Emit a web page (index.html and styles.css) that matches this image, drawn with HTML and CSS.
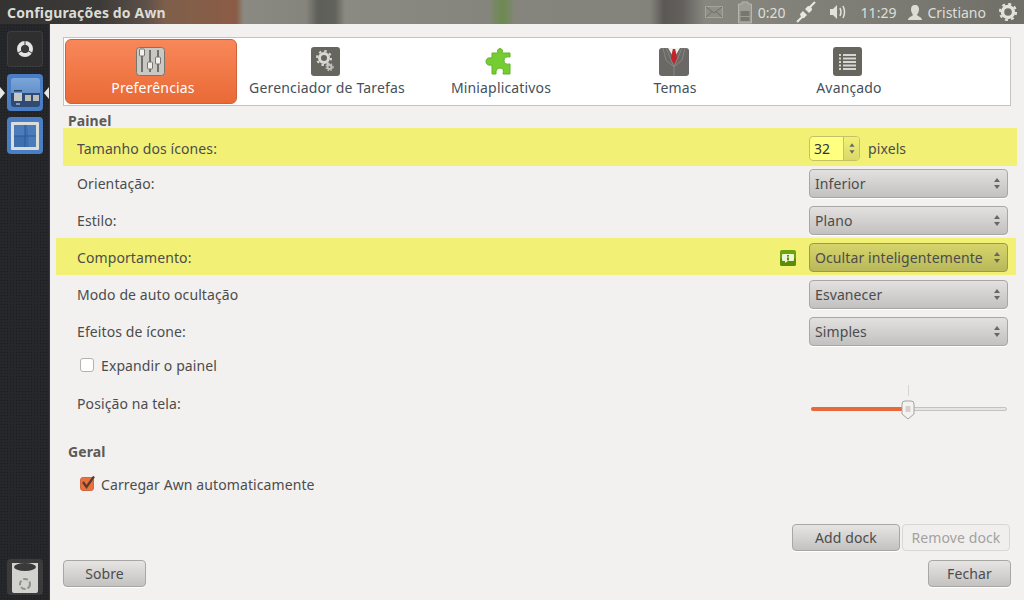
FILE: index.html
```html
<!DOCTYPE html>
<html>
<head>
<meta charset="utf-8">
<title>Configurações do Awn</title>
<link rel="stylesheet" href="styles.css">
</head>
<body>
<div class="topbar">
	<div class="win-title">Configurações do Awn</div>
	<div class="tray">
		<svg class="t-mail" width="18" height="12" viewBox="0 0 18 12"><rect x=".5" y=".5" width="17" height="11" fill="#8f8f88" stroke="#a4a49c"/><path d="M1 1l8 6 8-6M1 11l6-5.500M17 11l-6-5.500" fill="none" stroke="#6f6f69"/></svg>
		<svg class="t-batt" width="16" height="23" viewBox="0 0 16 23"><path d="M5 1h6v2h3.500v19h-13v-19h3.500z" fill="#9d9d96" stroke="#b5b5ae"/><rect x="3.500" y="10" width="9" height="5" fill="#77776f"/><rect x="3.500" y="16" width="9" height="4" fill="#77776f"/></svg>
		<span class="t-txt t-time1">0:20</span>
		<svg class="t-net" width="20" height="22" viewBox="0 0 20 22"><path d="M1 21l5-5M14 6l5-5" stroke="#e8e8e2" stroke-width="2" fill="none"/><path d="M4 13l3-3 4 4-3 3q-3 1-4-4zM9 8l3-3q4 0 4 4l-3 3z" fill="#e8e8e2"/></svg>
		<svg class="t-vol" width="18" height="16" viewBox="0 0 18 16"><path d="M1 5h3l4-4v14l-4-4H1z" fill="#e2e2dc"/><path d="M11 4q2 4 0 8M14 2q3 6 0 12" stroke="#e2e2dc" stroke-width="1.500" fill="none"/></svg>
		<span class="t-txt t-time2">11:29</span>
		<svg class="t-user" width="16" height="17" viewBox="0 0 16 17"><path d="M8 1c3 0 4 2 4 4.500S10.500 10 10 11c1 1.500 5 2 5 5H1c0-3 4-3.500 5-5-.5-1-2-3-2-5.500S5 1 8 1z" fill="#dcdcd6"/></svg>
		<span class="t-txt t-name">Cristiano</span>
		<svg class="t-gear" width="18" height="18" viewBox="0 0 18 18"><circle cx="9" cy="9" r="5.500" fill="none" stroke="#e2e2dc" stroke-width="3.400"/><circle cx="9" cy="9" r="8" fill="none" stroke="#e2e2dc" stroke-width="2.200" stroke-dasharray="3 3.280"/></svg>
	</div>
</div>

<div class="desk">
	<div class="launcher">
		<div class="launcher-top">
			<div class="tile tile-dark">
				<svg width="20" height="20" viewBox="0 0 20 20"><circle cx="10" cy="10" r="6" fill="none" stroke="#e4e4e4" stroke-width="4"/><path d="M10 10V2M10 10l7 4M10 10l-7 4" stroke="#3a3a3a" stroke-width="1"/><circle cx="10" cy="10" r="3.500" fill="#3a3a3a"/></svg>
			</div>
			<div class="tile tile-blue tile-active">
				<svg width="29" height="29" viewBox="0 0 29 29"><defs><linearGradient id="dockTop" x1="0" y1="0" x2="0" y2="1"><stop offset="0" stop-color="#7ba6da"/><stop offset="1" stop-color="#4d7db8"/></linearGradient></defs><rect width="29" height="29" rx="3" fill="url(#dockTop)"/><path d="M0 15h29v11q0 3-3 3H3q-3 0-3-3z" fill="#2f4b73"/><rect x="3" y="15" width="8" height="8" fill="#c8c8c4"/><rect x="14" y="17" width="6" height="6" fill="#bdbdb8"/><rect x="22" y="17" width="6" height="6" fill="#bdbdb8"/><rect x="3" y="12" width="8" height="1.500" fill="#2b3c55"/><path d="M5 26h4" stroke="#dfe8f2"/></svg>
			</div>
			<div class="tile tile-blue">
				<svg width="28" height="28" viewBox="0 0 28 28"><rect width="28" height="28" rx="1" fill="#dcdcd8"/><rect x="3" y="3" width="22" height="22" fill="#3f6fae"/><path d="M3 3h11v11H3zM16 3h9v22h-7z" fill="#4a7cbb"/><path d="M14 3v22M3 14h22" stroke="#2f5a96"/></svg>
			</div>
		</div>
		<div class="tile tile-trash">
			<svg width="28" height="33" viewBox="0 0 28 33"><path d="M1 2h26v28q0 2-2 2H3q-2 0-2-2z" fill="#d2d2ce"/><ellipse cx="14" cy="6" rx="11" ry="4" fill="#3a3a3a"/><circle cx="14" cy="23" r="5" fill="none" stroke="#8f8f8b" stroke-width="2" stroke-dasharray="5 2"/></svg>
		</div>
	</div>

	<div class="content">
		<div class="tabs">
			<div class="tab tab-on">
				<svg width="30" height="30" viewBox="0 0 30 30"><rect x=".5" y=".5" width="28" height="28" rx="3" fill="#c9c8c2" stroke="#77766f"/><path d="M6 3v22M14 3v22M22 3v22" stroke="#55544f" stroke-width="1.500"/><rect x="3.500" y="2" width="5" height="7" rx="1" fill="#f0f0ec" stroke="#77766f"/><rect x="11.500" y="15" width="5" height="7" rx="1" fill="#f0f0ec" stroke="#77766f"/><rect x="19.500" y="10" width="5" height="7" rx="1" fill="#f0f0ec" stroke="#77766f"/></svg>
				<span>Preferências</span>
			</div>
			<div class="tab">
				<svg width="30" height="30" viewBox="0 0 30 30"><rect width="29" height="29" rx="3" fill="#66665f"/><circle cx="13" cy="11" r="4.500" fill="none" stroke="#d8d8d4" stroke-width="3"/><circle cx="13" cy="11" r="7" fill="none" stroke="#d8d8d4" stroke-width="2" stroke-dasharray="2.500 3"/><circle cx="18.500" cy="20" r="2" fill="none" stroke="#c4c4c0" stroke-width="2"/><circle cx="18.500" cy="20" r="3.600" fill="none" stroke="#c4c4c0" stroke-width="1.200" stroke-dasharray="1.500 1.500"/></svg>
				<span>Gerenciador de Tarefas</span>
			</div>
			<div class="tab">
				<svg width="30" height="30" viewBox="0 0 30 30"><path d="M7 6h6Q11.500 2 15 1.500 18.500 2 17 6h8v4q-6-1-6 3.500t6 3.500v10h-7q1.500-6-3-6t-4 6H7v-9q-6 1-6-3.500T7 11z" fill="#76cc33" stroke="#62b326"/></svg>
				<span>Miniaplicativos</span>
			</div>
			<div class="tab">
				<svg width="30" height="30" viewBox="0 0 30 30"><path d="M0 4q0-3 3-3h24q3 0 3 3v22q0 3-3 3H3q-3 0-3-3z" fill="#6b6966"/><path d="M9 1h12l-6 10z" fill="#f0f0ee"/><path d="M13.800 2h2.400l.8 4 1 6-3 5-3-5 1-6z" fill="#c5222a"/><path d="M7 1l8 19 8-19M15 20v9M4 1l3 12 8 7M26 1l-3 12-8 7" fill="none" stroke="#898682"/></svg>
				<span>Temas</span>
			</div>
			<div class="tab">
				<svg width="30" height="30" viewBox="0 0 30 30"><rect width="29" height="29" rx="3" fill="#66665f"/><path d="M6 8h2M10 8h13M6 11.500h2M10 11.500h13M6 15h2M10 15h13M6 18.500h2M10 18.500h13M6 22h2M10 22h13" stroke="#d6d6d2" stroke-width="2"/></svg>
				<span>Avançado</span>
			</div>
		</div>

		<div class="sect">Painel</div>
		<div class="row row-hl row-first">
			<span class="lbl">Tamanho dos ícones:</span>
			<div class="spin-wrap">
				<div class="spin">
					<span class="spin-val">32</span>
					<span class="spin-btn"><i class="arr-up"></i><i class="arr-dn"></i></span>
				</div>
				<span class="unit">pixels</span>
			</div>
		</div>
		<div class="row row-a">
			<span class="lbl">Orientação:</span>
			<div class="combo"><span>Inferior</span><span class="updn"><i class="arr-up"></i><i class="arr-dn"></i></span></div>
		</div>
		<div class="row row-b">
			<span class="lbl">Estilo:</span>
			<div class="combo"><span>Plano</span><span class="updn"><i class="arr-up"></i><i class="arr-dn"></i></span></div>
		</div>
		<div class="row row-hl row-wide">
			<span class="lbl">Comportamento:</span>
			<svg class="info" width="16" height="16" viewBox="0 0 16 16"><rect width="16" height="16" rx="2" fill="#6ea30c"/><rect y="8" width="16" height="8" rx="2" fill="#5a8c06"/><path d="M3 4h10q1 0 1 1v5q0 1-1 1H8l-3 2v-2H3q-1 0-1-1V5q0-1 1-1z" fill="#eef5d8"/><rect x="7" y="5" width="2" height="1.600" fill="#5a8c06"/><rect x="7" y="7.400" width="2" height="3" fill="#5a8c06"/></svg>
			<div class="combo combo-hl"><span>Ocultar inteligentemente</span><span class="updn"><i class="arr-up"></i><i class="arr-dn"></i></span></div>
		</div>
		<div class="row">
			<span class="lbl">Modo de auto ocultação</span>
			<div class="combo"><span>Esvanecer</span><span class="updn"><i class="arr-up"></i><i class="arr-dn"></i></span></div>
		</div>
		<div class="row">
			<span class="lbl">Efeitos de ícone:</span>
			<div class="combo"><span>Simples</span><span class="updn"><i class="arr-up"></i><i class="arr-dn"></i></span></div>
		</div>
		<div class="check-row check-expand">
			<span class="check"></span>
			<span>Expandir o painel</span>
		</div>
		<div class="row row-slider">
			<span class="lbl">Posição na tela:</span>
			<div class="slider">
				<div class="tick"></div>
				<div class="track"><div class="track-fill"></div></div>
				<svg class="thumb" width="14" height="20" viewBox="0 0 14 20"><path d="M1 4q0-3 3-3h6q3 0 3 3v10l-6 5-6-5z" fill="#f4f3f1" stroke="#a3a29c"/><path d="M4.500 7h5M4.500 9h5M4.500 11h5" stroke="#b0afa9"/></svg>
			</div>
		</div>

		<div class="sect sect-geral">Geral</div>
		<div class="check-row check-auto">
			<span class="check check-on">
				<svg width="16" height="16" viewBox="0 0 16 16"><path d="M3 7l3.500 5L14 1.500" fill="none" stroke="#5a3a2a" stroke-width="2.200"/></svg>
			</span>
			<span>Carregar Awn automaticamente</span>
		</div>

		<div class="spacer"></div>
		<div class="dock-btns">
			<div class="btn btn-add">Add dock</div>
			<div class="btn btn-off">Remove dock</div>
		</div>
		<div class="foot">
			<div class="btn btn-foot">Sobre</div>
			<div class="btn btn-foot">Fechar</div>
		</div>
	</div>
</div>
</body>
</html>
```

FILE: styles.css
```css
*{box-sizing:border-box;}
html,body{margin:0; padding:0; width:1024px; height:600px; overflow:hidden;}
body{background:#f2f1f0; color:#4c4c4c; font-family:"Noto Sans","Open Sans",sans-serif; font-size:14px; letter-spacing:.1px; display:flex; flex-direction:column;}

/* top panel */
.topbar{
	height:24px; flex:none; display:flex; align-items:center; justify-content:space-between;
	background:linear-gradient(90deg,#343331 0,#3d3b38 100px,#5c5048 145px,#7f5f4b 166px,#8b5c45 236px,#8a8a82 244px,#85857d 306px,#5f5f5a 318px,#62625c 335px,#8a8a82 345px,#85857d 488px,#6c8a4f 502px,#85857d 516px,#83837b 650px,#5b5855 664px,#63605c 682px,#87877f 705px,#7c7c74 880px,#6f6f68 1024px);
}
.win-title{margin-left:7px; color:#dcdcd6; font-weight:bold; font-size:14px; letter-spacing:.15px;}
.tray{display:flex; align-items:center; height:24px;}
.t-txt{color:#dfdfd9; font-size:14px; letter-spacing:0;}
.t-mail{margin-right:14px;}
.t-batt{margin-right:5px;}
.t-time1{margin-right:10px;}
.t-net{margin-right:13px;}
.t-vol{margin-right:14px;}
.t-time2{margin-right:11px;}
.t-user{margin-right:4px;}
.t-name{margin-right:13px;}
.t-gear{margin-right:7px;}

.desk{flex:1; display:flex; min-height:0;}

/* launcher */
.launcher{
	width:50px; flex:none; padding:7px 7px 5px; display:flex; flex-direction:column; justify-content:space-between;
	background:#26272a radial-gradient(#1c1c1e 1px,transparent 1px) 0 0/3px 3px; border-right:1px solid #3a3a3a;
}
.launcher-top{display:flex; flex-direction:column; gap:6px;}
.tile{width:36px; height:36px; border-radius:4px; display:flex; align-items:center; justify-content:center; position:relative;}
.tile-dark{background:#2f2f2f; margin-bottom:1px; height:36px; box-shadow:inset 0 0 0 1px #3d3d3d;}
.tile-blue{background:#4a7ec4; height:37px;}
.tile-trash{background:#3b3b3b;}
.tile-active::before,.tile-active::after{
	content:""; position:absolute; top:13px; width:0; height:0;
	border-top:6px solid transparent; border-bottom:6px solid transparent;
}
.tile-active::before{left:-7px; border-left:5px solid #e8e8e8;}
.tile-active::after{right:-6px; border-right:5px solid #e8e8e8;}

/* main */
.content{flex:1; display:flex; flex-direction:column; padding:13px; min-width:0;}

.tabs{height:69px; flex:none; border:1px solid #c4c3c0; background:#fff; padding:1px; display:flex;}
.tab{width:174px; display:flex; flex-direction:column; align-items:center; padding-top:8px; color:#45505a; font-size:14px; letter-spacing:.16px; border-radius:6px; line-height:20px;}
.tab svg{display:block; height:30px; margin-bottom:1px;}
.tab span{margin-left:2px;}
.tab-on{width:172px; margin-right:2px; color:#fff; background:linear-gradient(#f9875a,#e96a36); border:1px solid #cf6136;}
.tab-on svg{margin-top:-1px;}
.tab-on span{margin-left:4px;}

.sect{font-weight:bold; color:#5c5a58; margin:5px 0 0 5px; height:17px; line-height:19px; font-size:14px;}
.sect-geral{margin-top:18px; line-height:17px;}

/* pitch is 37px but the controls sit a bit low in their row */
.row{height:37px; display:flex; align-items:center; padding:2px 3px 0 14px;}
.row-first{height:38px; margin-right:-6px; padding-top:3px; padding-right:9px;}
.row-a{height:36px; padding-top:0; padding-bottom:1px;}
.row-b{height:36px; padding-top:1px;}
.row-wide{margin-left:-7px; margin-right:-5px; padding-left:21px; padding-right:8px;}
.row-hl{background:#f2f175;}
.lbl{flex:1;}
.info{margin-right:13px;}

.combo{
	width:199px; height:29px; display:flex; align-items:center; justify-content:space-between; padding:0 5px;
	border:1px solid #a8a7a3; border-radius:4px; background:linear-gradient(#e2e1df,#c2c1bf);
	box-shadow:0 1px 0 #fff;
}
.combo-hl{background:linear-gradient(#d6d56b,#b9b85a); border-color:#9b9a45; box-shadow:none;}
.updn,.spin-btn{display:flex; flex-direction:column; gap:3px; align-items:center;}
.arr-up{width:0; height:0; border:3px solid transparent; border-top:0; border-bottom:4px solid #666;}
.arr-dn{width:0; height:0; border:3px solid transparent; border-bottom:0; border-top:4px solid #666;}
.updn{margin-right:2px;}

.spin-wrap{width:199px; display:flex; align-items:center; gap:8px;}
.spin{width:51px; height:25px; display:flex; border:1px solid #c3c26a; border-radius:4px; overflow:hidden; background:#ffff80;}
.spin-val{flex:1; padding-left:4px; line-height:23px; color:#333;}
.spin-btn{width:16px; justify-content:center; gap:3px; border-left:1px solid #c3c26a; background:linear-gradient(#f2f175,#d9d86a);}
.spin-btn i{transform:scale(.85);}

.check-row{display:flex; align-items:center; gap:7px; padding-left:17px;}
.check-expand{height:32px;}
.check-auto{height:32px; margin-top:8px;}
.check{width:14px; height:14px; flex:none; border:1px solid #b3b2ae; border-radius:3px; background:#fff; position:relative;}
.check-on{background:#e9703f; border-color:#d0693f;}
.check-on svg{position:absolute; left:-1px; top:-3px;}

.row-slider{height:44px; padding-top:0;}
.slider{width:196px; height:44px; margin-right:1px; position:relative;}
.tick{position:absolute; left:97px; top:4px; width:1px; height:11px; background:#d6d5d2;}
.track{position:absolute; left:0; right:0; top:26px; height:4px; border-radius:2px; background:#e6e5e2; border:1px solid #c4c3be;}
.track-fill{width:92px; height:4px; margin:-1px 0 0 -1px; border-radius:2px; background:#e9683a;}
.thumb{position:absolute; left:90px; top:19px;}

.spacer{flex:1;}
.btn{height:27px; line-height:25px; text-align:center; border:1px solid #a8a7a3; border-radius:4px; background:linear-gradient(#e6e5e3,#c3c2c0); color:#4c4c4c; box-shadow:0 1px 0 #fff;}
.dock-btns{display:flex; justify-content:flex-end; gap:2px; margin-bottom:9px; margin-right:1px;}
.btn-add{width:108px;}
.btn-off{width:108px; background:#f0efed; border-color:#d8d7d4; color:#a3a29f; box-shadow:none;}
.foot{display:flex; justify-content:space-between;}
.btn-foot{width:83px;}
```
